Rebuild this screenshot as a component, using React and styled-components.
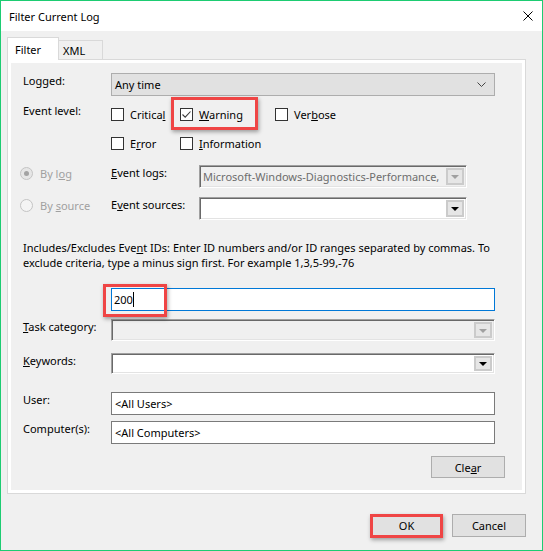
import React from "react";
import styled, { createGlobalStyle } from "styled-components";

const FONT = `"Noto Sans", "Segoe UI", sans-serif`;
const FS = 11;

const GlobalStyle = createGlobalStyle`
  html, body { margin: 0; padding: 0; background: #ffffff; }
  body { font-family: ${FONT}; font-size: ${FS}px; color: #000; }
  * { box-sizing: border-box; }
  u { text-underline-offset: 1px; }
`;

const Window = styled.div`
  width: 543px;
  height: 551px;
  border: 1px solid #1dcc72;
  background: #f0f0f0;
  display: flex;
  flex-direction: column;
`;

const TitleBar = styled.div`
  height: 30px;
  flex: none;
  background: #ffffff;
  display: flex;
  align-items: center;
  justify-content: space-between;
  padding: 0 9px 0 8px;
  font-size: ${FS}px;
`;

const CloseIcon = styled.svg`
  width: 10px;
  height: 10px;
  display: block;
`;

const Body = styled.div`
  flex: 1;
  display: flex;
  flex-direction: column;
  padding: 6px 16px 0 6px;
`;

const TabRow = styled.div`
  height: 22px;
  display: flex;
  align-items: flex-end;
`;

const Tab = styled.div`
  position: relative;
  z-index: ${(p) => (p.$active ? 1 : 0)};
  height: ${(p) => (p.$active ? 23 : 19)}px;
  margin-bottom: ${(p) => (p.$active ? -1 : 0)}px;
  margin-left: ${(p) => (p.$first ? 0 : -1)}px;
  width: ${(p) => p.$w}px;
  background: ${(p) => (p.$active ? "#ffffff" : "#f0f0f0")};
  border: 1px solid #d9d9d9;
  border-bottom: none;
  display: flex;
  align-items: center;
  padding-left: ${(p) => (p.$active ? 7 : 4)}px;
  padding-top: ${(p) => (p.$active ? 0 : 1)}px;
`;

const Panel = styled.div`
  border: 1px solid #d9d9d9;
  background: #ffffff;
  padding: 3px;
`;

const PanelInner = styled.div`
  background: #f0f0f0;
  display: flex;
  flex-direction: column;
  padding: 10px 27px 12px 12px;
`;

const FieldRow = styled.div`
  display: flex;
  align-items: flex-start;
  margin-top: ${(p) => p.$mt || 0}px;
`;

const Label = styled.div`
  width: ${(p) => p.$w || 88}px;
  flex: none;
  line-height: 16px;
  white-space: nowrap;
  color: ${(p) => (p.$disabled ? "#a0a0a0" : "#000")};
`;

const Select = styled.div`
  flex: 1;
  height: 23px;
  background: #e1e1e1;
  border: 1px solid #adadad;
  display: flex;
  align-items: center;
  justify-content: space-between;
  padding: 0 8px 0 3px;
`;

const CheckGrid = styled.div`
  display: grid;
  grid-template-columns: 69px 95px auto;
  grid-auto-rows: 23px;
  row-gap: 6px;
`;

const CheckItem = styled.div`
  position: relative;
  display: flex;
  align-items: center;
  gap: 6px;
  white-space: nowrap;
`;

const Box = styled.span`
  width: 13px;
  height: 13px;
  flex: none;
  border: 1px solid #333333;
  background: #ffffff;
  display: flex;
  align-items: center;
  justify-content: center;
`;

const Highlight = styled.div`
  position: absolute;
  left: ${(p) => p.$l}px;
  top: ${(p) => p.$t}px;
  width: ${(p) => p.$w}px;
  height: ${(p) => p.$h}px;
  border: 3px solid #ef4545;
  box-shadow: 1px 2px 4px rgba(0, 0, 0, 0.35);
  pointer-events: none;
`;

const RadioCol = styled.div`
  width: 91px;
  flex: none;
  margin-left: -3px;
  height: 16px;
  display: flex;
  align-items: center;
  gap: 7px;
  color: #a0a0a0;
  white-space: nowrap;
`;

const RadioCircle = styled.span`
  width: 13px;
  height: 13px;
  flex: none;
  border-radius: 50%;
  border: 1px solid #c4c4c4;
  background: ${(p) => (p.$checked ? "#e6e6e6" : "#f4f4f4")};
  display: flex;
  align-items: center;
  justify-content: center;
  &::after {
    content: "";
    display: ${(p) => (p.$checked ? "block" : "none")};
    width: 5px;
    height: 5px;
    border-radius: 50%;
    background: #a3a3a3;
  }
`;

const SunkenCombo = styled.div`
  width: ${(p) => (p.$w ? `${p.$w}px` : "auto")};
  flex: ${(p) => (p.$w ? "none" : "1")};
  height: ${(p) => p.$h || 23}px;
  border-top: 1px solid #a0a0a0;
  border-left: 1px solid #a0a0a0;
  border-right: 1px solid #ffffff;
  border-bottom: 1px solid #ffffff;
  box-shadow: inset 1px 1px 0 #696969, inset -1px -1px 0 #e3e3e3;
  background: ${(p) => (p.$disabled ? "#f0f0f0" : "#ffffff")};
  display: flex;
  align-items: center;
  padding: 2px 2px 2px 2px;
  overflow: hidden;
`;

const ComboText = styled.span`
  flex: 1;
  min-width: 0;
  overflow: hidden;
  white-space: nowrap;
  color: #6d6d6d;
  padding-left: 1px;
`;

const ComboButton = styled.span`
  width: 18px;
  align-self: stretch;
  flex: none;
  background: #e6e6e6;
  border: 2px solid #cbcbcb;
  display: flex;
  align-items: center;
  justify-content: center;
  &::after {
    content: "";
    border-left: 4px solid transparent;
    border-right: 4px solid transparent;
    border-top: 4px solid ${(p) => (p.$disabled ? "#a0a0a0" : "#000000")};
    margin-top: 1px;
  }
`;

const Paragraph = styled.div`
  margin-top: ${(p) => p.$mt || 0}px;
  line-height: 15px;
  white-space: nowrap;
`;

const TextInput = styled.div`
  position: relative;
  flex: 1;
  height: 23px;
  background: #ffffff;
  border: 1px solid ${(p) => (p.$focused ? "#0078d7" : "#7a7a7a")};
  display: flex;
  align-items: center;
  padding-left: ${(p) => (p.$pl ? p.$pl : 3)}px;
  white-space: nowrap;
`;

const Caret = styled.span`
  display: inline-block;
  width: 1px;
  height: 15px;
  background: #000;
  margin-left: 0px;
`;

const ClearRow = styled.div`
  display: flex;
  justify-content: flex-end;
  margin-top: 12px;
  margin-right: -10px;
`;

const Button = styled.div`
  position: relative;
  width: ${(p) => p.$w}px;
  height: ${(p) => p.$h || 23}px;
  background: #e1e1e1;
  border: 1px solid ${(p) => (p.$default ? "#0078d7" : "#adadad")};
  display: flex;
  align-items: center;
  justify-content: center;
  white-space: nowrap;
`;

const ButtonRow = styled.div`
  display: flex;
  justify-content: flex-end;
  gap: 9px;
  margin-top: 20px;
`;

function Checkbox({ checked, children }) {
  return (
    <>
      <Box>
        {checked && (
          <svg width="11" height="11" viewBox="0 0 11 11">
            <path d="M1.5 5.5 L4.2 8.2 L9.5 2.5" fill="none" stroke="#3a3a3a" strokeWidth="1.1" />
          </svg>
        )}
      </Box>
      <span>{children}</span>
    </>
  );
}

export default function App() {
  return (
    <>
      <GlobalStyle />
      <Window>
        <TitleBar>
          <span>Filter Current Log</span>
          <CloseIcon viewBox="0 0 10 10">
            <path d="M0.5 0.5 L9.5 9.5 M9.5 0.5 L0.5 9.5" stroke="#000" strokeWidth="1" fill="none" />
          </CloseIcon>
        </TitleBar>
        <Body>
          <TabRow>
            <Tab $active $first $w={52}>Filter</Tab>
            <Tab $w={45}>XML</Tab>
          </TabRow>
          <Panel>
            <PanelInner>
              <FieldRow>
                <Label>Logged:</Label>
                <Select>
                  <span>Any time</span>
                  <svg width="9" height="5" viewBox="0 0 9 5">
                    <path d="M0.5 0.5 L4.5 4.5 L8.5 0.5" fill="none" stroke="#444" strokeWidth="1" />
                  </svg>
                </Select>
              </FieldRow>

              <FieldRow $mt={7}>
                <Label style={{ paddingTop: 0 }}>Event level:</Label>
                <CheckGrid>
                  <CheckItem>
                    <Checkbox>
                      Critica<u>l</u>
                    </Checkbox>
                  </CheckItem>
                  <CheckItem>
                    <Checkbox checked>
                      <u>W</u>arning
                    </Checkbox>
                    <Highlight $l={-9} $t={-6} $w={87} $h={33} />
                  </CheckItem>
                  <CheckItem>
                    <Checkbox>
                      Ver<u>b</u>ose
                    </Checkbox>
                  </CheckItem>
                  <CheckItem>
                    <Checkbox>
                      E<u>r</u>ror
                    </Checkbox>
                  </CheckItem>
                  <CheckItem>
                    <Checkbox>
                      <u>I</u>nformation
                    </Checkbox>
                  </CheckItem>
                </CheckGrid>
              </FieldRow>

              <FieldRow $mt={10}>
                <RadioCol>
                  <RadioCircle $checked />
                  <span>
                    By l<u>o</u>g
                  </span>
                </RadioCol>
                <Label>
                  <u>E</u>vent logs:
                </Label>
                <SunkenCombo $w={268} $disabled>
                  <ComboText>Microsoft-Windows-Diagnostics-Performance,</ComboText>
                  <ComboButton $disabled />
                </SunkenCombo>
              </FieldRow>

              <FieldRow $mt={9}>
                <RadioCol>
                  <RadioCircle />
                  <span>
                    By <u>s</u>ource
                  </span>
                </RadioCol>
                <Label>
                  E<u>v</u>ent sources:
                </Label>
                <SunkenCombo $w={268}>
                  <ComboText />
                  <ComboButton />
                </SunkenCombo>
              </FieldRow>

              <Paragraph $mt={20}>
                Includes/Excludes Eve<u>n</u>t IDs: Enter ID numbers and/or ID ranges separated by commas. To
                <br />
                exclude criteria, type a minus sign first. For example 1,3,5-99,-76
              </Paragraph>

              <FieldRow $mt={18}>
                <Label />
                <TextInput $focused $pl={2}>
                  200
                  <Caret />
                  <Highlight $l={-9} $t={-5} $w={64} $h={33} />
                </TextInput>
              </FieldRow>

              <FieldRow $mt={8}>
                <Label>
                  <u>T</u>ask category:
                </Label>
                <SunkenCombo $h={22} $disabled>
                  <ComboText />
                  <ComboButton $disabled />
                </SunkenCombo>
              </FieldRow>

              <FieldRow $mt={12}>
                <Label>
                  <u>K</u>eywords:
                </Label>
                <SunkenCombo $h={21}>
                  <ComboText />
                  <ComboButton />
                </SunkenCombo>
              </FieldRow>

              <FieldRow $mt={18}>
                <Label>User:</Label>
                <TextInput>&lt;All Users&gt;</TextInput>
              </FieldRow>

              <FieldRow $mt={6}>
                <Label>Computer(s):</Label>
                <TextInput>&lt;All Computers&gt;</TextInput>
              </FieldRow>

              <ClearRow>
                <Button $w={74} $h={22}>
                  Cle<u>a</u>r
                </Button>
              </ClearRow>
            </PanelInner>
          </Panel>

          <ButtonRow>
            <Button $w={73} $default>
              OK
              <Highlight $l={-1} $t={-1} $w={73} $h={24} />
            </Button>
            <Button $w={74}>Cancel</Button>
          </ButtonRow>
        </Body>
      </Window>
    </>
  );
}
